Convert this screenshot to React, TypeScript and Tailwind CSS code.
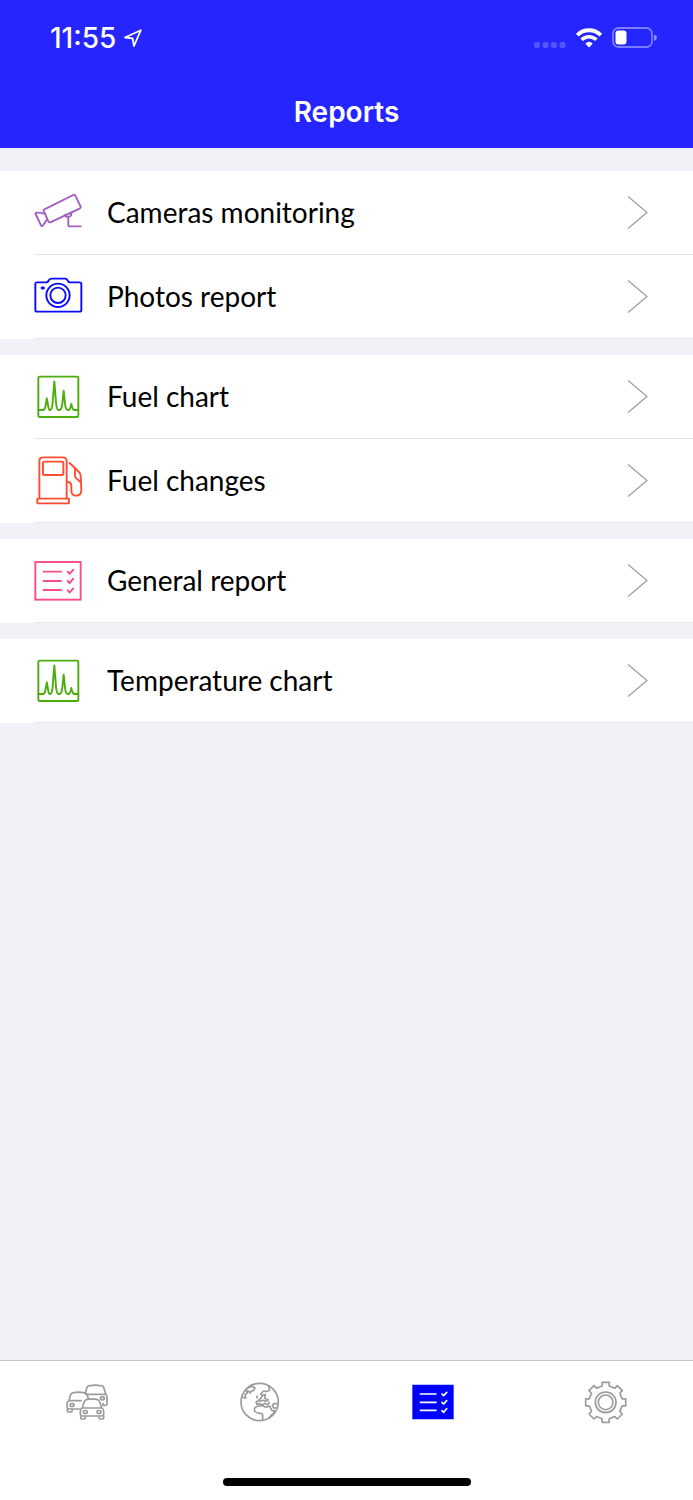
import type { ReactNode } from "react";

type RowIconProps = { viewBox: string; color: string; children: ReactNode };

function RowIcon({ viewBox, color, children }: RowIconProps) {
  return (
    <svg
      className={`h-[47px] w-12 shrink-0 overflow-visible ${color}`}
      viewBox={viewBox}
      fill="none"
      stroke="currentColor"
      strokeWidth="5.7"
      strokeLinejoin="round"
      strokeLinecap="round"
      aria-hidden="true"
    >
      {children}
    </svg>
  );
}

function SurveillanceIcon() {
  return (
    <RowIcon viewBox="42 27 144 141" color="text-[#a25fc0]">
      <path d="M73 88 160 45Q164 43 166 47L182 80Q183 83 180 85L91 127Q87 128 85 124L71 92Q70 89 73 88Z" />
      <path d="M72 101Q60 97 49 98 46 98 47 102L63 136Q66 140 69 136L80 120" />
      <path d="M134 105Q137 111 145 111 155 110 154 98M145 111V135Q145 139 149 139H182" />
    </RowIcon>
  );
}

function PhotoIcon() {
  return (
    <RowIcon viewBox="42 24 144 141" color="text-[#0a0aff]">
      <path d="M51 52H79Q83 52 85 48L87 45Q90 41 94 41H136Q140 41 142 45L144 48Q146 52 150 52H179Q184 52 184 57V135Q184 140 179 140H51Q46 140 46 135V57Q46 52 51 52Z" />
      <circle cx="114" cy="91" r="35" />
      <circle cx="114" cy="91" r="23" />
      <ellipse cx="68" cy="69" rx="5" ry="3.5" fill="currentColor" strokeWidth="3" />
    </RowIcon>
  );
}

function ChartIcon() {
  return (
    <RowIcon viewBox="42 24 144 141" color="text-[#4bae0c]">
      <rect x="55" y="35" width="120" height="121" rx="4" />
      <path d="M56 135H70Q75 134 77 120L80.500 100 84 120Q86 134 89 135H91Q96 134 98 112L103 49 108 112Q110 134 115 135H119Q125 134 127 116L131 77 135 116Q137 134 143 135H146Q151 133 154 117 157 133 162 135H174" />
    </RowIcon>
  );
}

function FuelIcon() {
  return (
    <RowIcon viewBox="42 21 144 141" color="text-[#ff4d33]">
      <path d="M58 145V33Q58 22 70 22H128Q140 22 140 33V145" />
      <rect x="52" y="146" width="95" height="14" rx="1" />
      <rect x="69" y="35" width="61" height="40" rx="4" />
      <path d="M149 39 177 66Q182 71 182 78L184 121Q184 137 169 137 154 136 154 122V109Q154 96 142 96" />
      <path d="M165 56V78Q165 81 167 83L182 97" />
    </RowIcon>
  );
}

function ChecklistIcon() {
  return (
    <RowIcon viewBox="42 21 144 141" color="text-[#fb4b88]">
      <g strokeLinejoin="miter">
        <rect x="46" y="36" width="136" height="113" />
        <path d="M71 65H123M71 93H123M71 120H123" />
        <path d="M143 65 149 71 160 59M143 93 149 99 160 86M143 121 149 127 160 115" />
      </g>
    </RowIcon>
  );
}

function TabIcon({ viewBox, children }: { viewBox: string; children: ReactNode }) {
  return (
    <svg
      className="size-12 text-[#9b9b9b]"
      viewBox={viewBox}
      fill="none"
      stroke="currentColor"
      strokeWidth="5"
      strokeLinejoin="round"
      strokeLinecap="round"
      aria-hidden="true"
    >
      {children}
    </svg>
  );
}

function CarsIcon() {
  return (
    <TabIcon viewBox="38 69 144 144">
      <path d="M105 114 110 97Q112 92 120 92 135 89 150 92 158 92 160 97L166 116Q170 121 170 127V146Q170 151 163 151H158M106 118H166M158 151V145" />
      <ellipse cx="156" cy="130" rx="6" ry="4.500" />
      <path d="M89 162H56Q50 162 50 155V147Q50 141 56 137L60 121Q62 114 70 113 85 110 100 113 108 113 111 120L114 131M56 137H92M51 160V167Q51 171 55 171H62Q66 171 66 163" />
      <ellipse cx="65" cy="150" rx="6" ry="4.500" />
      <path d="M96 158 102 140Q104 134 111 133 125 130 139 133 146 134 148 140L154 158Q160 163 160 169V178Q160 183 154 183H96Q90 183 90 178V169Q90 163 96 158ZM97 159H153" />
      <path d="M91 183V188Q91 192 95 192H101Q105 192 105 185M146 185Q146 192 150 192H156Q160 192 160 188V183" />
      <ellipse cx="105" cy="171" rx="6" ry="4.500" />
      <ellipse cx="146" cy="171" rx="6" ry="4.500" />
    </TabIcon>
  );
}

function GlobeIcon() {
  return (
    <TabIcon viewBox="48 69 144 144">
      <circle cx="119" cy="141" r="56" />
      <path d="M84 99 96 94 105 99 101 106 94 108 90 114 85 108 80 107M78 104 82 114 75 119 77 129 69 128" />
      <path d="M146 93 149 106 138 110 131 108 122 117 127 121 124 128 115 137 108 141 111 148 119 146 127 150 134 145 143 149 148 142M128 121 136 119 134 130 145 135 137 139 128 136 120 139M111 123V129" />
      <path d="M128 196V181Q128 174 118 175 102 172 103 163 106 153 118 153 127 150 133 155 142 157 149 153L154 164Q156 169 164 167 162 176 154 180L147 190M174 146H161L157 152 162 160 168 158" />
    </TabIcon>
  );
}

function ReportsIcon() {
  return (
    <TabIcon viewBox="42 69 144 144">
      <path d="M52 89H176V193H52Z" fill="#0000ff" stroke="none" />
      <g stroke="#ffffff">
        <path d="M76 117H123M76 142H123M76 166H123" />
        <path d="M141 117 146 122 155 112M141 142 146 147 155 137M141 167 146 172 155 161" />
      </g>
    </TabIcon>
  );
}

function gearPath(cx: number, cy: number) {
  const points: string[] = [];
  for (let tooth = 0; tooth < 8; tooth++) {
    const corners: [number, number][] = [
      [50, -15],
      [51, -12],
      [61, -10],
      [61, 10],
      [51, 12],
      [50, 15],
    ];
    for (const [radius, offset] of corners) {
      const angle = ((tooth * 45 + offset) * Math.PI) / 180;
      points.push(`${cx + radius * Math.sin(angle)} ${cy - radius * Math.cos(angle)}`);
    }
  }
  return `M${points.join("L")}Z`;
}

function GearIcon() {
  return (
    <TabIcon viewBox="52 69 144 144">
      <path d={gearPath(123, 142)} />
      <circle cx="123" cy="142" r="31" />
      <circle cx="123" cy="142" r="22" />
    </TabIcon>
  );
}

function Chevron() {
  return (
    <svg className="h-[35px] w-5 shrink-0 text-[#9a9a9a]" viewBox="0 0 20 35" fill="none" stroke="currentColor" strokeWidth="1.2" aria-hidden="true">
      <path d="M0 1.500 19 17.500 0 33.500" />
    </svg>
  );
}

const sections: { label: string; icon: ReactNode }[][] = [
  [
    { label: "Cameras monitoring", icon: <SurveillanceIcon /> },
    { label: "Photos report", icon: <PhotoIcon /> },
  ],
  [
    { label: "Fuel chart", icon: <ChartIcon /> },
    { label: "Fuel changes", icon: <FuelIcon /> },
  ],
  [{ label: "General report", icon: <ChecklistIcon /> }],
  [{ label: "Temperature chart", icon: <ChartIcon /> }],
];

const tabs: { label: string; icon: ReactNode }[] = [
  { label: "Vehicles", icon: <CarsIcon /> },
  { label: "Map", icon: <GlobeIcon /> },
  { label: "Reports", icon: <ReportsIcon /> },
  { label: "Settings", icon: <GearIcon /> },
];

function StatusBar() {
  return (
    <div className="flex h-[76px] items-center justify-between pr-9 pl-[50px]">
      <div className="flex items-center gap-2">
        <span className="text-[28px] leading-8 font-medium">11:55</span>
        <svg className="size-[18px]" viewBox="0 0 18 18" fill="none" stroke="currentColor" strokeWidth="1.800" strokeLinejoin="round" aria-hidden="true">
          <path d="M1 8.500 16.800 1.200 10 17 8.600 9.400Z" />
        </svg>
      </div>
      <div className="flex items-center gap-[10px]">
        <svg className="h-[22px] w-8" viewBox="0 0 32 22" fill="currentColor" opacity="0.22" aria-hidden="true">
          <rect x="0" y="15" width="6" height="6" rx="2" />
          <rect x="8.500" y="15" width="6" height="6" rx="2" />
          <rect x="17" y="15" width="6" height="6" rx="2" />
          <rect x="25.500" y="15" width="6" height="6" rx="2" />
        </svg>
        <svg className="h-5 w-[26px]" viewBox="0 0 26 20" fill="none" stroke="currentColor" aria-hidden="true">
          <path d="M1.200 7.200Q6 2.200 13 2.200T24.800 7.200" strokeWidth="3.900" />
          <path d="M5.600 11.800Q8.800 8.700 13 8.700T20.400 11.800" strokeWidth="3.600" />
          <path d="M9.300 15.600Q13 12 16.700 15.600L13.600 19Q13 19.600 12.400 19Z" fill="currentColor" stroke="none" />
        </svg>
        <svg className="h-[22px] w-[45px]" viewBox="0 0 45 22" fill="none" aria-hidden="true">
          <rect x="1" y="1" width="39" height="19" rx="5.500" stroke="currentColor" strokeWidth="1.800" opacity="0.4" />
          <rect x="3.500" y="3.500" width="11" height="14" rx="3" fill="currentColor" />
          <path d="M42 7.500Q45 8.500 45 10.500T42 14Z" fill="currentColor" opacity="0.5" />
        </svg>
      </div>
    </div>
  );
}

export default function App() {
  return (
    <div className="flex min-h-screen flex-col bg-[#f1f1f7]">
      <header className="bg-[#2525ff] font-['Inter',sans-serif] text-white">
        <StatusBar />
        <div className="flex h-[72px] items-center justify-center">
          <h1 className="text-[28px] leading-8 font-semibold">Reports</h1>
        </div>
      </header>

      <main className="flex flex-1 flex-col gap-4 pt-[23px] font-['Lato',sans-serif] text-black">
        {sections.map((rows) => (
          <ul key={rows[0].label} className="bg-white">
            {rows.map((row) => (
              <li key={row.label}>
                <a href="#" className="flex h-[84px] pl-[34px]">
                  <span className="flex flex-1 items-center gap-[25px] border-b border-[#e6e6ea] pr-[45px]">
                    {row.icon}
                    <span className="flex-1 pb-0.5 text-[28px] leading-8">{row.label}</span>
                    <Chevron />
                  </span>
                </a>
              </li>
            ))}
          </ul>
        ))}
      </main>

      <footer className="border-t border-[#c4c4c8] bg-white pb-[14px]">
        <nav className="grid grid-cols-4 pt-[17px]" aria-label="Main">
          {tabs.map((tab) => (
            <button key={tab.label} type="button" aria-label={tab.label} className="flex justify-center">
              {tab.icon}
            </button>
          ))}
        </nav>
        <div className="mx-auto mt-[52px] h-2 w-[248px] rounded-full bg-black" />
      </footer>
    </div>
  );
}
